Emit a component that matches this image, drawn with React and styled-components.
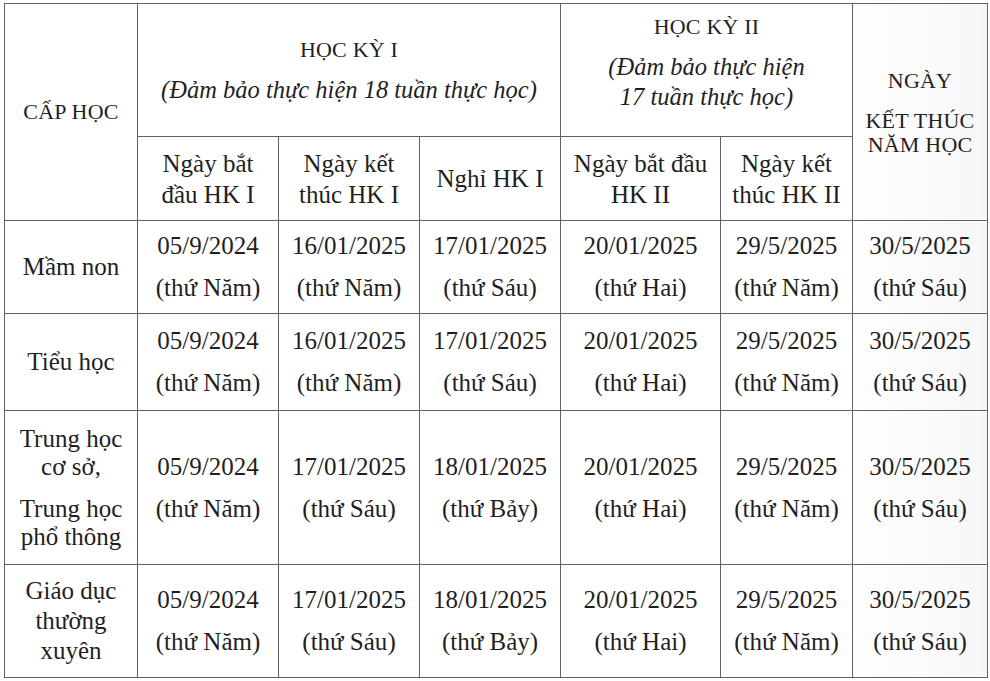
import React from 'react';
import styled, { createGlobalStyle, css } from 'styled-components';

const serif = css`
  font-family: "Liberation Serif", "Times New Roman", serif;
`;

const GlobalStyle = createGlobalStyle`
  html, body {
    margin: 0;
    padding: 0;
    background: #f2f2f2;
  }
  #root, #root * {
    font-family: "Liberation Serif", "Times New Roman", serif;
  }
  body {
    color: #1f1f1f;
  }
`;

const Page = styled.div`
  width: 990px;
  height: 681px;
  padding: 3px 0 0 4px;
  box-sizing: border-box;
  background: #ffffff;
`;

const Table = styled.table`
  ${serif};
  border-collapse: collapse;
  table-layout: fixed;
  width: 983px;
  color: #1f1f1f;
  background: linear-gradient(to right, #ffffff 0%, #ffffff 85%, #f7f7f7 100%);
`;

const Row = styled.tr`
  height: ${(p) => p.$h}px;
`;

const Td = styled.td`
  ${serif};
  border: 1.5px solid #626262;
  padding: 0;
  text-align: center;
  vertical-align: middle;
  font-size: 25px;
  line-height: 28px;
  color: #1f1f1f;
`;

const Caps = styled.div`
  ${serif};
  font-size: 22px;
  line-height: ${(p) => p.$lh || 28}px;
  margin-top: ${(p) => p.$mt || 0}px;
  letter-spacing: 0.2px;
`;

const Note = styled.div`
  ${serif};
  font-style: italic;
  font-size: 24.5px;
  line-height: 30px;
  margin-top: ${(p) => p.$mt || 0}px;
  margin-bottom: ${(p) => p.$mb || 0}px;
`;

const SubHead = styled.div`
  ${serif};
  line-height: 31px;
`;

const Para = styled.div`
  ${serif};
  line-height: ${(p) => p.$lh || 28}px;
  & + & {
    margin-top: 14px;
  }
`;

const cols = [133, 141, 141, 141, 160, 132, 135];

const rows = [
  {
    name: [['Mầm non']],
    h: 93,
    end1: ['16/01/2025', 'thứ Năm'],
    off: ['17/01/2025', 'thứ Sáu'],
  },
  {
    name: [['Tiểu học']],
    h: 97,
    end1: ['16/01/2025', 'thứ Năm'],
    off: ['17/01/2025', 'thứ Sáu'],
  },
  {
    name: [
      ['Trung học', 'cơ sở,'],
      ['Trung học', 'phổ thông'],
    ],
    h: 154,
    end1: ['17/01/2025', 'thứ Sáu'],
    off: ['18/01/2025', 'thứ Bảy'],
  },
  {
    name: [['Giáo dục', 'thường', 'xuyên']],
    lh: 30,
    h: 113,
    end1: ['17/01/2025', 'thứ Sáu'],
    off: ['18/01/2025', 'thứ Bảy'],
  },
];

const DateCell = ({ date, day }) => (
  <Td>
    <Para>{date}</Para>
    <Para>({day})</Para>
  </Td>
);

const Lines = ({ items }) =>
  items.map((t, i) => (
    <React.Fragment key={i}>
      {i > 0 && <br />}
      {t}
    </React.Fragment>
  ));

const App = () => {
  return (
    <Page>
      <GlobalStyle />
      <Table>
        <colgroup>
          {cols.map((w, i) => (
            <col key={i} style={{ width: w }} />
          ))}
        </colgroup>
        <tbody>
          <Row $h={133}>
            <Td rowSpan={2}>
              <Caps>CẤP HỌC</Caps>
            </Td>
            <Td colSpan={3}>
              <Caps>HỌC KỲ I</Caps>
              <Note $mt={11}>(Đảm bảo thực hiện 18 tuần thực học)</Note>
            </Td>
            <Td colSpan={2}>
              <Caps>HỌC KỲ II</Caps>
              <Note $mt={11} $mb={16}>
                (Đảm bảo thực hiện
                <br />
                17 tuần thực học)
              </Note>
            </Td>
            <Td rowSpan={2}>
              <Caps>NGÀY</Caps>
              <Caps $lh={24} $mt={14}>
                KẾT THÚC
                <br />
                NĂM HỌC
              </Caps>
            </Td>
          </Row>
          <Row $h={84}>
            <Td>
              <SubHead>
                Ngày bắt
                <br />
                đầu HK I
              </SubHead>
            </Td>
            <Td>
              <SubHead>
                Ngày kết
                <br />
                thúc HK I
              </SubHead>
            </Td>
            <Td>
              <SubHead>Nghỉ HK I</SubHead>
            </Td>
            <Td>
              <SubHead>
                Ngày bắt đầu
                <br />
                HK II
              </SubHead>
            </Td>
            <Td>
              <SubHead>
                Ngày kết
                <br />
                thúc HK II
              </SubHead>
            </Td>
          </Row>
          {rows.map((r, i) => (
            <Row key={i} $h={r.h}>
              <Td>
                {r.name.map((p, j) => (
                  <Para key={j} $lh={r.lh}>
                    <Lines items={p} />
                  </Para>
                ))}
              </Td>
              <DateCell date="05/9/2024" day="thứ Năm" />
              <DateCell date={r.end1[0]} day={r.end1[1]} />
              <DateCell date={r.off[0]} day={r.off[1]} />
              <DateCell date="20/01/2025" day="thứ Hai" />
              <DateCell date="29/5/2025" day="thứ Năm" />
              <DateCell date="30/5/2025" day="thứ Sáu" />
            </Row>
          ))}
        </tbody>
      </Table>
    </Page>
  );
};

export default App;
